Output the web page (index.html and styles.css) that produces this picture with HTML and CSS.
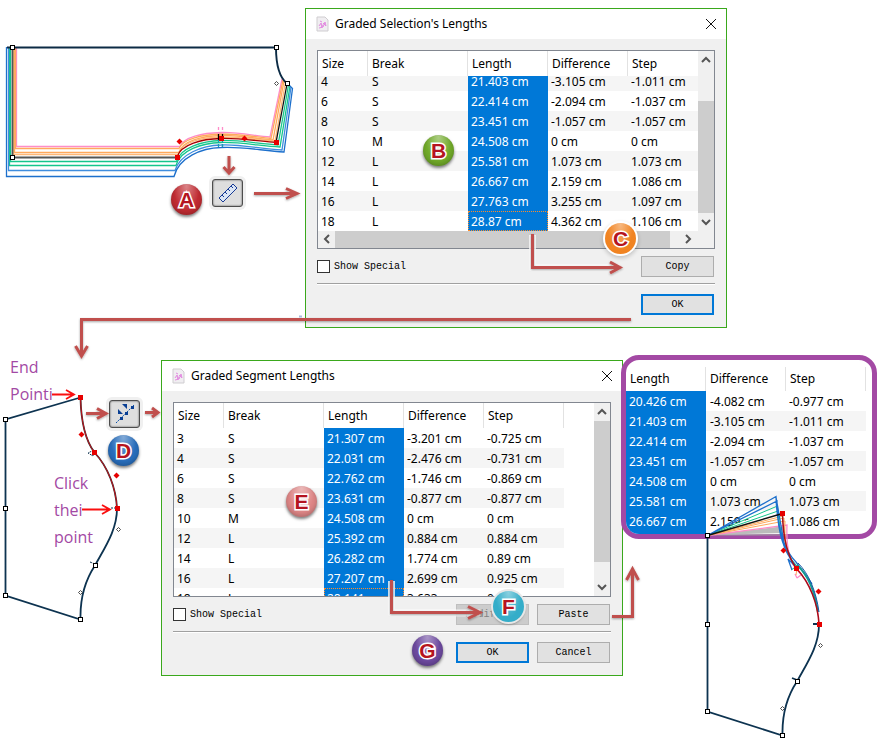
FILE: index.html
```html
<!DOCTYPE html>
<html lang="en">
<head>
<meta charset="utf-8">
<title>Graded Lengths</title>
<link rel="stylesheet" href="styles.css">
</head>
<body>
<main class="board">

<section class="window window-selection">
  <header class="titlebar">
    <svg class="doc" viewBox="0 0 13 16"><path d="M1 1h8l3 3v11H1z" fill="#f0eef1" stroke="#cfcdd0"/><path d="M3 10l2-3 2 4 2-5 1 4M4 5l2 1M3 12l4-1M7 7l3 3M5 8l1 4" fill="none" stroke="#e28be0"/></svg>
    <h2>Graded Selection's Lengths</h2>
    <button class="close" aria-label="Close"><svg viewBox="0 0 12 12"><path d="M1 1l10 10M11 1L1 11"/></svg></button>
  </header>
  <div class="content">
    <div class="list">
      <div class="view">
        <table class="grid scrolled">
          <thead><tr><th class="size">Size</th><th class="break">Break</th><th>Length</th><th>Difference</th><th class="last">Step</th></tr></thead>
          <tbody>
            <tr><td>4</td><td>S</td><td>21.403 cm</td><td>-3.105 cm</td><td>-1.011 cm</td></tr>
            <tr><td>6</td><td>S</td><td>22.414 cm</td><td>-2.094 cm</td><td>-1.037 cm</td></tr>
            <tr><td>8</td><td>S</td><td>23.451 cm</td><td>-1.057 cm</td><td>-1.057 cm</td></tr>
            <tr><td>10</td><td>M</td><td>24.508 cm</td><td>0 cm</td><td>0 cm</td></tr>
            <tr><td>12</td><td>L</td><td>25.581 cm</td><td>1.073 cm</td><td>1.073 cm</td></tr>
            <tr><td>14</td><td>L</td><td>26.667 cm</td><td>2.159 cm</td><td>1.086 cm</td></tr>
            <tr><td>16</td><td>L</td><td>27.763 cm</td><td>3.255 cm</td><td>1.097 cm</td></tr>
            <tr><td>18</td><td>L</td><td class="focus">28.87 cm</td><td>4.362 cm</td><td>1.106 cm</td></tr>
          </tbody>
        </table>
        <div class="vbar">
          <svg viewBox="0 0 16 18"><path d="M4 11l4-4 4 4"/></svg>
          <i class="gap"></i><i class="thumb"></i>
          <svg viewBox="0 0 16 18"><path d="M4 7l4 4 4-4"/></svg>
        </div>
      </div>
      <div class="hbar">
        <svg viewBox="0 0 17 16"><path d="M11 4L7 8l4 4"/></svg>
        <i class="thumb"></i>
        <svg viewBox="0 0 44 16"><path d="M16 4l4 4-4 4"/></svg>
      </div>
    </div>
    <div class="row">
      <label class="check"><input type="checkbox">Show Special</label>
      <button class="btn">Copy</button>
    </div>
    <hr>
    <div class="row end"><button class="btn primary">OK</button></div>
  </div>
</section>

<section class="window window-segment">
  <header class="titlebar">
    <svg class="doc" viewBox="0 0 13 16"><path d="M1 1h8l3 3v11H1z" fill="#f0eef1" stroke="#cfcdd0"/><path d="M3 10l2-3 2 4 2-5 1 4M4 5l2 1M3 12l4-1M7 7l3 3M5 8l1 4" fill="none" stroke="#e28be0"/></svg>
    <h2>Graded Segment Lengths</h2>
    <button class="close" aria-label="Close"><svg viewBox="0 0 12 12"><path d="M1 1l10 10M11 1L1 11"/></svg></button>
  </header>
  <div class="content">
    <div class="list">
      <div class="view clipped">
        <table class="grid">
          <thead><tr><th class="size">Size</th><th class="break">Break</th><th>Length</th><th>Difference</th><th>Step</th></tr></thead>
          <tbody>
            <tr><td>3</td><td>S</td><td>21.307 cm</td><td>-3.201 cm</td><td>-0.725 cm</td></tr>
            <tr><td>4</td><td>S</td><td>22.031 cm</td><td>-2.476 cm</td><td>-0.731 cm</td></tr>
            <tr><td>6</td><td>S</td><td>22.762 cm</td><td>-1.746 cm</td><td>-0.869 cm</td></tr>
            <tr><td>8</td><td>S</td><td>23.631 cm</td><td>-0.877 cm</td><td>-0.877 cm</td></tr>
            <tr><td>10</td><td>M</td><td>24.508 cm</td><td>0 cm</td><td>0 cm</td></tr>
            <tr><td>12</td><td>L</td><td>25.392 cm</td><td>0.884 cm</td><td>0.884 cm</td></tr>
            <tr><td>14</td><td>L</td><td>26.282 cm</td><td>1.774 cm</td><td>0.89 cm</td></tr>
            <tr><td>16</td><td>L</td><td>27.207 cm</td><td>2.699 cm</td><td>0.925 cm</td></tr>
            <tr><td>18</td><td>L</td><td class="focus">28.141 cm</td><td>3.633 cm</td><td>0.934 cm</td></tr>
          </tbody>
        </table>
        <div class="vbar">
          <svg viewBox="0 0 16 18"><path d="M4 11l4-4 4 4"/></svg>
          <i class="thumb tall"></i><i class="gap short"></i>
          <svg viewBox="0 0 16 18"><path d="M4 7l4 4 4-4"/></svg>
        </div>
      </div>
    </div>
    <div class="row">
      <label class="check"><input type="checkbox">Show Special</label>
      <button class="btn" disabled>Modify...</button>
      <button class="btn">Paste</button>
    </div>
    <hr>
    <div class="row end"><button class="btn primary">OK</button><button class="btn">Cancel</button></div>
  </div>
</section>

<section class="callout">
  <table class="grid partial">
    <thead><tr><th>Length</th><th>Difference</th><th>Step</th></tr></thead>
    <tbody>
      <tr><td>20.426 cm</td><td>-4.082 cm</td><td>-0.977 cm</td></tr>
      <tr><td>21.403 cm</td><td>-3.105 cm</td><td>-1.011 cm</td></tr>
      <tr><td>22.414 cm</td><td>-2.094 cm</td><td>-1.037 cm</td></tr>
      <tr><td>23.451 cm</td><td>-1.057 cm</td><td>-1.057 cm</td></tr>
      <tr><td>24.508 cm</td><td>0 cm</td><td>0 cm</td></tr>
      <tr><td>25.581 cm</td><td>1.073 cm</td><td>1.073 cm</td></tr>
      <tr><td>26.667 cm</td><td>2.159 cm</td><td>1.086 cm</td></tr>
    </tbody>
  </table>
</section>

<p class="note note-end">End<br>Pointi</p>
<p class="note note-click">Click<br>thei<br>point</p>

<button class="tool tool-ruler" aria-label="Measure selection"><svg viewBox="0 0 20 20"><path d="M1 15L15 1l4 4L5 19z" fill="#dce6f5" stroke="#173a94"/><path d="M4 12l2 2M7 9l2 2M10 6l2 2M13 3l2 2" stroke="#173a94"/></svg></button>
<button class="tool tool-segment" aria-label="Measure segment"><svg viewBox="0 0 20 20"><path d="M1 19L19 1" stroke="#0a4fa8" fill="none" stroke-dasharray="2 1"/><g fill="#0a3f94"><path d="M3 5v5h5zM7 0l5 5V0zM5 13h3v3H5zM10 8h3v3h-3zM16 2h3v3h-3z"/></g></svg></button>

<svg class="ink" viewBox="0 0 881 745" width="881" height="745" aria-hidden="true">
  <defs>
    <filter id="soft" x="-20%" y="-20%" width="140%" height="150%" filterUnits="objectBoundingBox"><feDropShadow dx="0" dy="1" stdDeviation="1" flood-color="#000" flood-opacity=".35"/></filter>
    <g id="node"><rect x="-2" y="-2" width="4" height="4" fill="#fff" stroke="#000"/></g>
    <g id="stop"><rect x="-2.5" y="-2.5" width="5" height="5" fill="#e60000"/></g>
    <path id="hand" d="M0-2L2 0 0 2-2 0z" fill="#fff" stroke="#222" stroke-width=".8"/>
    <path id="grip" d="M0-3L3 0 0 3-3 0z" fill="#e60000"/>
  </defs>

  <g fill="none" stroke-width="1.300">
    <path stroke="#ff8cc8" d="M16.500 47V146.500H180C184 137 202 133 221 132.500C240 132 255 136 270 137L282 79"/>
    <path stroke="#ffa95c" d="M15.500 47V148.500H179C183 139 202 134.500 221 134C240 134 256 137 271 138.500L283 80"/>
    <path stroke="#ffa95c" d="M14.500 47V152.500H179C182 141 202 136 221 135.500C240 135 257 139 273 140L284 81"/>
    <path stroke="#ffb878" d="M13.500 47V154.500H178C181 142 202 137.500 221 137C240 137 258 140 275 141L285.500 82"/>
    <path stroke="#16c58c" d="M10.500 47V161.500H176.500C180 148 202 141 221 140.500C240 140 260 144 278 145L288.500 85"/>
    <path stroke="#16c58c" d="M9.500 47V165.500H176C180 150 202 143 221 142.500C240 142 261 146 280 147L290 86"/>
    <path stroke="#3f8ddd" d="M8.500 47V170.500H175C180 154 202 145.500 221 145C240 144 261 149 282 150L291 87"/>
    <path stroke="#1d70cc" d="M6.500 47V176.500H174C179 157 202 148 221 147.500C240 146 264 151 284 152L292.500 88.500L287 83"/>
    <path stroke="#555" stroke-width="1.800" d="M12.500 47V157.500H177"/>
    <path stroke="#111" d="M276 142.500L287 84"/>
    <path stroke="#a60000" stroke-width="1.300" d="M177 157C181 144 202 139 221 138.500C240 138 258 141 276 142.500"/>
    <path stroke="#0c2b45" stroke-width="1.900" d="M7 47.500H276C276 65 279 77 287 83.500"/>
    <path stroke="#ff8cc8" stroke-dasharray="3 2" d="M218.500 127v7M222.500 127v7"/>
    <path stroke="#000" d="M218.500 134v6M222.500 134v6"/>
    <path stroke="#16a0b0" stroke-dasharray="3 1" d="M218.500 140v8M222.500 140v8"/>
  </g>
  <use href="#node" x="12.500" y="47.500"/><use href="#node" x="276.500" y="47.500"/><use href="#node" x="287.500" y="83.500"/><use href="#node" x="12.500" y="157.500"/>
  <use href="#hand" x="276.500" y="83.500"/><use href="#stop" x="177.500" y="157.500"/><use href="#stop" x="221.500" y="138.500"/><use href="#stop" x="276.500" y="142.500"/>
  <use href="#grip" x="179.500" y="141.500"/><use href="#grip" x="244.500" y="138.500"/>

  <g fill="none">
    <path stroke="#0d3350" stroke-width="1.800" d="M80.500 397.500L5.500 419.500V595.500L80.500 619.500C80 600 84 582 95 565.500C105 547 117 530 117 508.500"/>
    <path stroke="#333" stroke-width="1.800" d="M80.500 397.500C81 420 85 440 94.500 452.500C108 467 116 488 117 508.500"/>
    <path stroke="#c4101c" d="M80.500 397.500C81 420 85 440 94.500 452.500C108 467 116 488 117 508.500"/>
    <path stroke="#0d3350" stroke-dasharray="2 1" d="M94 450l-6 3 5 3v-5M111 508h5M90 562l5 2"/>
  </g>
  <use href="#node" x="5.500" y="419.500"/><use href="#node" x="5.500" y="508.500"/><use href="#node" x="5.500" y="595.500"/><use href="#node" x="80.500" y="619.500"/><use href="#node" x="95.500" y="565.500"/>
  <use href="#stop" x="80.500" y="397.500"/><use href="#stop" x="94.500" y="452.500"/><use href="#stop" x="117.500" y="508.500"/>
  <use href="#grip" x="81.500" y="434.500"/><use href="#grip" x="116.500" y="475.500"/><use href="#hand" x="118.500" y="529.500"/><use href="#hand" x="80.500" y="592.500"/>

  <path d="M707 535L776 509 784 527 787 534z" fill="#fff"/>
  <path d="M707 535L785 526V533z" fill="#bbb"/>
  <g fill="none">
    <path stroke="#999" d="M707 535H786"/>
    <path stroke="#ff8cc8" stroke-width="1.300" d="M707.500 535.500L787 525C786 548 790 562 797 570C808 580 818 600 819 624M797 578l-2-4M797 578l4-3"/>
    <path stroke="#ffa95c" d="M707.500 535.500L785 521C784 545 789 560 797 568M707.500 535.500L784 518C783 544 788 558 797 568L796 575M707.500 535.500L783 516"/>
    <path stroke="#16c58c" d="M707.500 535.500L778 511C780 540 788 557 797 566M707.500 535.500L777.500 506C779 540 787 556 797 566L791 570"/>
    <path stroke="#1d70cc" stroke-width="1.300" d="M707.500 535.500L777 501C777 530 784 552 795 565M707.500 535.500L776 496.500C777 528 784 550 796 562L812 584M797 568l-9-9 4 11M776 497L784 543"/>
    <path stroke="#159a93" stroke-width="2" d="M797 565C808 575 815 592 818 612"/>
    <path stroke="#1457a8" d="M798 563C809 574 816 591 819 612"/>
    <path stroke="#111" stroke-width="1.500" d="M707.500 535.500L782.500 513.500"/>
    <path stroke="#0d3350" stroke-width="1.800" d="M707.500 535.500V711.500L782.500 735.500C782 716 786 698 797 681.500C807 663 819 646 819 624.500M813 624h5M792 678l5 2"/>
    <path stroke="#a80d18" stroke-width="1.500" d="M782.500 513.500C783 536 787 556 796.500 568.500C810 583 818 604 819 624.500"/>
  </g>
  <use href="#node" x="707.500" y="535.500"/><use href="#node" x="707.500" y="624.500"/><use href="#node" x="707.500" y="711.500"/><use href="#node" x="782.500" y="735.500"/><use href="#node" x="797.500" y="681.500"/>
  <use href="#stop" x="782.500" y="513.500"/><use href="#stop" x="796.500" y="568.500"/><use href="#stop" x="819.500" y="624.500"/>
  <use href="#grip" x="783.500" y="550.500"/><use href="#grip" x="818.500" y="591.500"/><use href="#hand" x="820.500" y="645.500"/><use href="#hand" x="782.500" y="708.500"/>

  <g fill="none" stroke="#fff" stroke-opacity=".8" stroke-width="7" stroke-linejoin="round">
    <path d="M532.500 235V268H620M391.500 581V613H480"/>
  </g>
  <g fill="none" stroke="#c0504d" stroke-width="3" filter="url(#soft)">
    <path d="M229 156V173M223.500 167l5.500 6 5.500-6"/>
    <path d="M254 193.500H297M286 188.500l11 5-11 5"/>
    <path d="M532.500 234V267.500H620M610 262l10 5.500-10 5.500"/>
    <path d="M631 319.500H81.500V356M75.500 346l6 10 6-10"/>
    <path d="M86 413.500H106M97 408.500l9 5-9 5"/>
    <path d="M145 412.500H158M152 408l6 4.500-6 4.500"/>
    <path d="M391.500 580V612.500H480M468 606.500l12 6-12 6"/>
    <path d="M612 616.500H632.500V570M626.500 580l6-11 6 11"/>
  </g>
  <g fill="none" stroke="#fa0f0f" stroke-width="1.800"><path d="M52 394.500H74M66 390l8 4.500-8 4.500M82 509.500H110M102 505l8 4.500-8 4.500"/></g>
  <path d="M299 316.500h3" stroke="#aabbdd" stroke-width="2"/>
</svg>

<b class="badge badge-a">A</b>
<b class="badge badge-b">B</b>
<b class="badge badge-c">C</b>
<b class="badge badge-d">D</b>
<b class="badge badge-e">E</b>
<b class="badge badge-f">F</b>
<b class="badge badge-g">G</b>
</main>
</body>
</html>
```

FILE: styles.css
```css
* { box-sizing: border-box; }
body { margin: 0; background: #fff; color: #000; font: 12px/20px "Noto Sans", "Open Sans", sans-serif; }
button { font: inherit; color: inherit; padding: 0; }

/* Free canvas with floating windows, notes and drawn pieces */
.board { position: relative; min-height: 100vh; overflow: hidden; }
.ink { position: absolute; left: 0; top: 0; pointer-events: none; }

.window { position: absolute; background: #f0f0f0; border: 1px solid #3aa81c; }
.window-selection { left: 305px; top: 8px; }
.window-segment { left: 161px; top: 360px; }
.titlebar { display: flex; align-items: center; height: 30px; padding: 0 9px 0 10px; background: #fff; }
.titlebar h2 { flex: 1; margin: 0 0 0 6px; font-size: 12px; font-weight: 400; }
.doc { width: 13px; height: 16px; }
.close { display: flex; border: 0; background: none; }
.close svg { width: 12px; height: 12px; fill: none; stroke: #111; }
.content { padding: 11px 11px 12px; }

.list { border: 1px solid #828790; background: #fff; }
.view { display: flex; justify-content: space-between; }
.clipped { height: 193px; overflow: hidden; width: 436px; }
.grid { border-collapse: separate; border-spacing: 0; table-layout: fixed; align-self: flex-start; }
.grid th, .grid td { padding: 0 0 0 3px; text-align: left; font-weight: 400; white-space: nowrap; }
.grid th { width: 80px; height: 25px; padding-left: 4px; border-right: 1px solid #e2e2e2; }
.grid .size { width: 50px; }
.grid .break { width: 100px; }
.grid .last { width: 70px; border-right: 0; }
.grid td { height: 20px; padding-top: 2px; line-height: 18px; }
.grid td:nth-child(2) { padding-left: 4px; }
.grid tbody tr:nth-child(even) { background: #f5f5f5; }
.grid td:nth-child(3) { background: #0078d7; color: #fff; }
.grid .focus { outline: 1px dotted #ff8c28; outline-offset: -1px; }
.scrolled tbody tr:nth-child(odd) { background: #f5f5f5; }
.scrolled tbody tr:nth-child(even) { background: #fff; }
.scrolled tbody tr:first-child td { height: 15px; padding-top: 1px; line-height: 10px; vertical-align: top; }

.vbar { display: flex; flex-direction: column; width: 16px; background: #f0f0f0; }
.vbar svg { width: 16px; height: 18px; }
.vbar svg, .hbar svg { flex: none; fill: none; stroke: #555; stroke-width: 2; }
.thumb { flex: 1; background: #cdcdcd; }
.gap { height: 32px; }
.gap.short { height: 16px; }
.hbar { display: flex; height: 17px; background: #f0f0f0; }
.hbar svg { height: 16px; }

.row { display: flex; gap: 8px; align-items: center; margin-top: 7px; padding-right: 1px; }
.end { justify-content: flex-end; margin-top: 9px; }
.content hr { margin: 6px 0 0; border: 0; height: 2px; background: #a0a0a0; border-bottom: 1px solid #fff; }
.btn, .check { font: 10px/16px "Liberation Mono", monospace; }
.btn { width: 73px; height: 21px; border: 1px solid #adadad; background: #e1e1e1; }
.btn:disabled { background: #ccc; border-color: #bfbfbf; color: #838383; }
.primary { border: 2px solid #0078d7; }
.check { display: flex; flex: 1; align-items: center; gap: 4px; }
.check input { appearance: none; width: 13px; height: 13px; margin: 0; border: 1px solid #333; background: #fff; }

.callout { position: absolute; left: 621px; top: 355px; padding: 7px 6px 0 0; border: 5px solid #a349a4; border-radius: 18px; background: #fff; overflow: hidden; }
.partial th { height: 24px; }
.partial td:first-child { background: #0078d7; color: #fff; }
.partial td:nth-child(3) { background: none; color: inherit; }
.partial tr:last-child td { height: 23px; padding-bottom: 3px; }

.note { position: absolute; margin: 0; color: #a349a4; font: 16px/27px "Open Sans", "Noto Sans", sans-serif; }
.note-end { left: 10px; top: 354px; }
.note-click { left: 54px; top: 470px; }

.tool { position: absolute; display: flex; align-items: center; justify-content: center; width: 31px; height: 28px; border: 1px solid #4d4d4d; border-radius: 3px; background: #dedede; box-shadow: 0 0 0 3px #f0f0f0, inset 0 0 2px #444; }
.tool svg { width: 20px; height: 20px; }
.tool-ruler { left: 212px; top: 179px; }
.tool-segment { left: 109px; top: 400px; }

.badge { position: absolute; display: flex; align-items: center; justify-content: center; width: 31px; height: 31px; border-radius: 50%; color: #b51420; font: 700 21px/30px "Liberation Sans", sans-serif; -webkit-text-stroke: 3px #fff; paint-order: stroke fill; }
.badge { background-image: radial-gradient(ellipse at 50% 5%, rgba(255,255,255,.45), rgba(255,255,255,.05) 60%); box-shadow: 0 2px 3px rgba(0,0,0,.5), inset 0 -2px 4px rgba(0,0,0,.2); }
.badge-a { left: 171px; top: 184px; background-color: #bd2027; }
.badge-b { left: 423px; top: 135px; background-color: #69a51e; }
.badge-c { left: 605px; top: 223px; background-color: #f07d16; box-shadow: 0 0 0 2px #fff, 0 2px 4px 2px rgba(0,0,0,.2); }
.badge-d { left: 108px; top: 435px; background-color: #1d66b8; }
.badge-e { left: 286px; top: 486px; background-color: #dc8080; }
.badge-f { left: 493px; top: 591px; background-color: #29a9c6; box-shadow: 0 0 0 2px #e8e8e8, 0 2px 3px rgba(0,0,0,.5); }
.badge-g { left: 412px; top: 635px; background-color: #65409a; }
```
